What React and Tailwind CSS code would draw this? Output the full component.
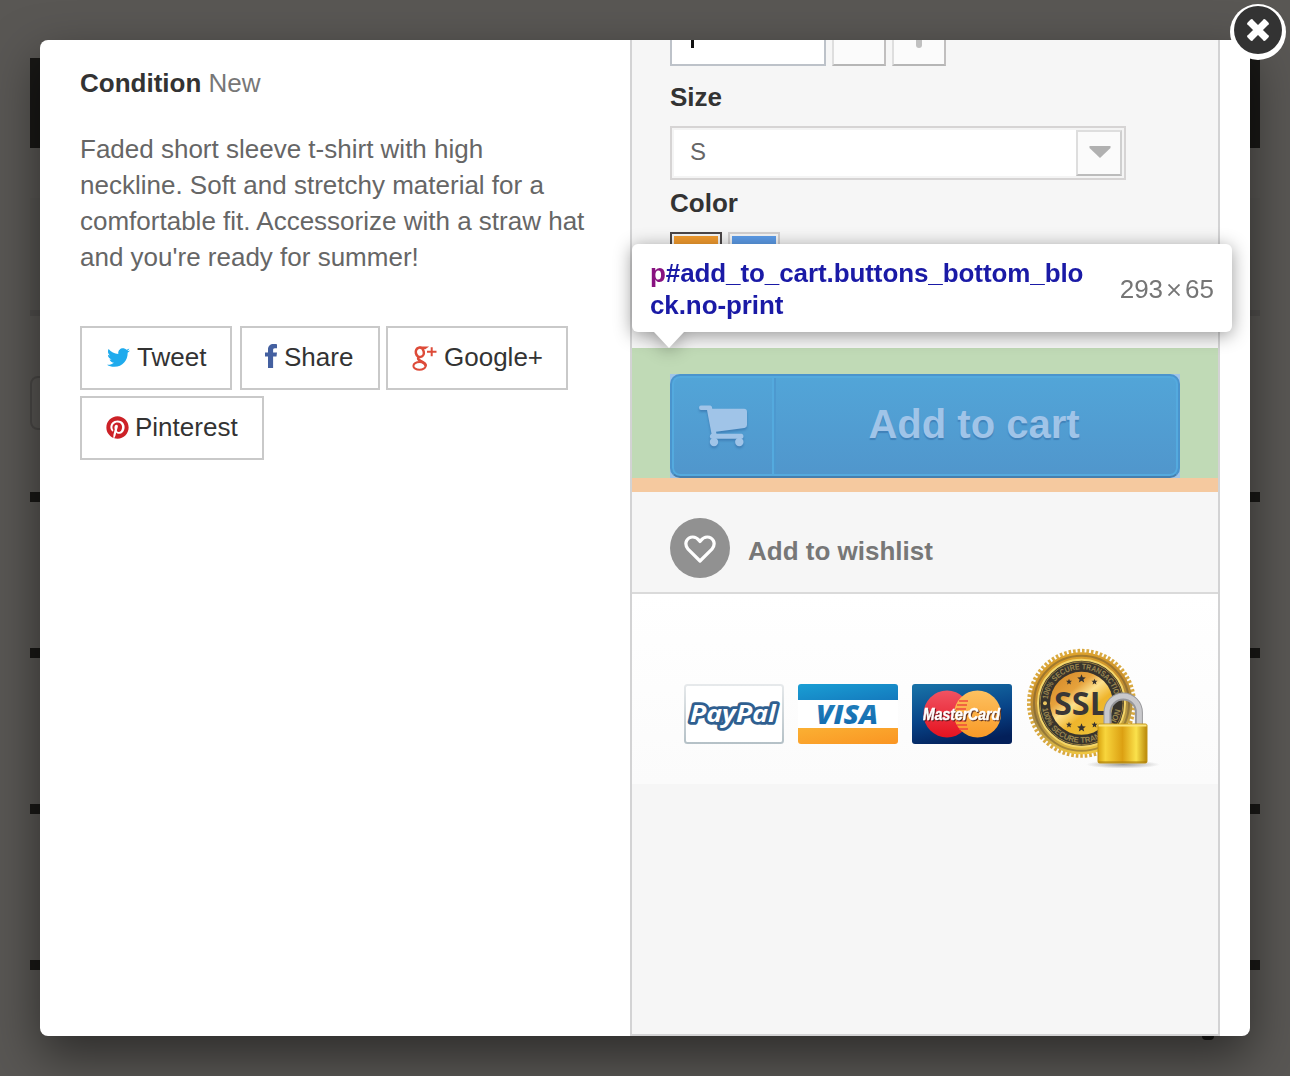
import React from "react";
import { FaTwitter, FaPinterest } from "react-icons/fa";

function ShareButton({ icon, label, className }) {
  return (
    <button type="button" className={`flex h-16 items-center border-2 border-[#c9c9c9] bg-white pl-6 text-[26px] leading-none text-[#333] ${className}`}>
      {icon}
      <span className="relative -top-px whitespace-nowrap">{label}</span>
    </button>
  );
}

function FacebookIcon() {
  return (
    <svg className="relative -top-0.5 ml-[-1px] mr-[7px] h-6 w-3 shrink-0" viewBox="0 0 12 24" fill="#4460a0">
      <path d="M12 .2v4H9.900C8.400 4.200 8.100 5 8.100 6.100v2.300H12L11.500 12.600H8.100V24H3V12.600H0V8.400h3V5.500C3 2 5.200 0 8.500 0 10.200 0 11.500.100 12 .200z" />
    </svg>
  );
}

function GooglePlusIcon() {
  return (
    <svg className="relative top-0 mr-[7px] h-[25px] w-[25px] shrink-0" viewBox="0 0 25 25" fill="none" stroke="#dd4b39">
      <ellipse cx="7.800" cy="6.300" rx="4" ry="4.700" strokeWidth="2.500" transform="rotate(-12 7.800 6.300)" />
      <path d="M7.500 1.300H14.800L13 2.600H10" strokeWidth="1.500" />
      <path d="M6.800 10.800C5.200 12.500 6.500 13.800 8.500 14.900 12 16.800 14.200 17.800 13.600 20.300" strokeWidth="2.600" />
      <ellipse cx="7.500" cy="19.900" rx="6.100" ry="3.900" strokeWidth="2" />
      <path d="M19.700 1.200v9M15 5.700h9.500" strokeWidth="2" />
    </svg>
  );
}

function CartIcon() {
  return (
    <svg className="relative -left-px h-[46px] w-[50px]" viewBox="698 403 50 46" fill="#a0c4e8" style={{ filter: "drop-shadow(0 2px 1px rgba(40,90,150,.45))" }}>
      <path d="M701 405.500h9c1.500 0 2 1 2.300 3.300H744q3 0 3 3V425q0 2.600-2.500 3L716 431.800l.5 2H741.500q2 0 2 2.500t-2 2.500H712q-2.200 0-2.200-2.500 0-1.500 1.700-2.500L707 410h-6q-2 0-2-2.200t2-2.300z" />
      <circle cx="714" cy="442" r="4.200" />
      <circle cx="739.300" cy="442" r="4.200" />
    </svg>
  );
}

function PayPalCard() {
  return (
    <svg className="h-[62px] w-[102px]" viewBox="0 0 102 62">
      <defs>
        <linearGradient id="ppEdge" x2="0" y2="1"><stop stopColor="#e6e9eb" /><stop offset="1" stopColor="#b5c1c7" /></linearGradient>
      </defs>
      <rect x="2" y="2" width="98" height="58" rx="2.500" fill="#fff" stroke="url(#ppEdge)" strokeWidth="2" />
      <text x="7" y="38.500" textLength="86" lengthAdjust="spacingAndGlyphs" fontFamily="Open Sans, sans-serif" fontSize="24" fontWeight="700" fontStyle="italic" fill="#fff" stroke="#2f5f90" strokeWidth="5.500" paintOrder="stroke" strokeLinejoin="round">PayPal</text>
    </svg>
  );
}

function VisaCard() {
  return (
    <svg className="h-[62px] w-[102px]" viewBox="0 0 102 62">
      <defs>
        <linearGradient id="vBlue" x2="1" y2="1"><stop stopColor="#1aa0d5" /><stop offset="1" stopColor="#1479bd" /></linearGradient>
        <linearGradient id="vText" x2="0" y2="1"><stop stopColor="#2583bd" /><stop offset="1" stopColor="#0f68ae" /></linearGradient>
        <linearGradient id="vOrange" x2="1" y2="1"><stop stopColor="#fbb033" /><stop offset="1" stopColor="#fa9422" /></linearGradient>
        <clipPath id="vClip"><rect x="1" y="1" width="100" height="60" rx="3" /></clipPath>
      </defs>
      <g clipPath="url(#vClip)">
        <rect width="102" height="62" fill="#fff" />
        <rect width="102" height="17" fill="url(#vBlue)" />
        <rect y="45" width="102" height="17" fill="url(#vOrange)" />
      </g>
      <text x="19" y="40.500" textLength="62" lengthAdjust="spacingAndGlyphs" fontFamily="Open Sans, sans-serif" fontSize="27" fontWeight="800" fontStyle="italic" fill="url(#vText)">VISA</text>
    </svg>
  );
}

function MasterCard() {
  return (
    <svg className="h-[62px] w-[102px]" viewBox="0 0 102 62">
      <defs>
        <linearGradient id="mBg" x1=".2" x2=".5" y2="1"><stop stopColor="#1770a6" /><stop offset=".55" stopColor="#084488" /><stop offset="1" stopColor="#03205a" /></linearGradient>
        <linearGradient id="mRed" x2="0" y2="1"><stop stopColor="#f15362" /><stop offset="1" stopColor="#e5121f" /></linearGradient>
        <linearGradient id="mGold" x2="0" y2="1"><stop stopColor="#fdc160" /><stop offset="1" stopColor="#f99a27" /></linearGradient>
      </defs>
      <rect x="1" y="1" width="100" height="60" rx="3" fill="url(#mBg)" />
      <circle cx="36" cy="31" r="23.500" fill="url(#mRed)" />
      <circle cx="66.500" cy="31" r="23.500" fill="url(#mGold)" />
      <path d="M48 18h9M46 22h10M45 26h10M45 38h10M46 42h10M48 46h9" stroke="#ee4b3d" strokeWidth="1.300" />
      <text x="12" y="36.500" textLength="77" lengthAdjust="spacingAndGlyphs" fontFamily="Liberation Sans, sans-serif" fontSize="16" fontWeight="700" fontStyle="italic" fill="#fff" stroke="#fff" strokeWidth=".5" style={{ filter: "drop-shadow(1px 1.500px .5px rgba(60,20,20,.8))" }}>MasterCard</text>
    </svg>
  );
}

const STAR = "0,-4.500 1.200,-1.500 4.300,-1.400 1.900,.6 2.700,3.700 0,1.900 -2.700,3.700 -1.900,.6 -4.300,-1.400 -1.200,-1.500";
const STARS = [[55, 31, 1], [42.500, 34, 0.7], [68, 34, 0.7], [55, 80, 1], [42.500, 77, 0.7], [68, 77, 0.7]];

function SslSeal() {
  return (
    <svg className="h-[124px] w-[136px]" viewBox="0 0 136 124">
      <defs>
        <linearGradient id="sGold" x1=".3" x2=".5" y2="1"><stop stopColor="#dfa42c" /><stop offset=".35" stopColor="#c98f2c" /><stop offset=".6" stopColor="#a88a44" /><stop offset="1" stopColor="#efc640" /></linearGradient>
        <linearGradient id="sCore" x2=".8" y2="1"><stop stopColor="#cf8224" /><stop offset=".35" stopColor="#e6a23c" /><stop offset=".5" stopColor="#fce08c" /><stop offset=".68" stopColor="#efb52c" /><stop offset="1" stopColor="#eac238" /></linearGradient>
        <linearGradient id="sLock" x2="1"><stop stopColor="#d9a410" /><stop offset=".15" stopColor="#f8d53c" /><stop offset=".5" stopColor="#dca012" /><stop offset=".78" stopColor="#fbe24c" /><stop offset="1" stopColor="#b98708" /></linearGradient>
        <radialGradient id="sShade"><stop stopColor="#555" stopOpacity=".55" /><stop offset="1" stopColor="#555" stopOpacity="0" /></radialGradient>
        <path id="ringTop" d="M21 55.500a34 34 0 0 1 68 0" />
        <path id="ringBottom" d="M15.500 55.500a39.500 39.500 0 0 0 79 0" />
      </defs>
      <g transform="translate(1.500 .8)">
        <circle cx="55" cy="55.500" r="52.500" fill="none" stroke="#d9a940" strokeWidth="4" strokeDasharray="2.600 1.900" />
        <circle cx="55" cy="55.500" r="51" fill="url(#sGold)" />
        <circle cx="55" cy="55.500" r="47.500" fill="none" stroke="#6b5630" strokeOpacity=".5" strokeWidth="2" />
        <circle cx="55" cy="55.500" r="43.500" fill="#38342c" stroke="#f4d568" strokeWidth="2" />
        <circle cx="55" cy="55.500" r="41.500" fill="none" stroke="#9a8040" strokeWidth="1" />
        <circle cx="55" cy="55.500" r="31.500" fill="url(#sCore)" />
        <g fill="#9a8650" fontFamily="Liberation Sans, sans-serif" fontSize="8" fontWeight="700">
          <text><textPath href="#ringTop" startOffset="4" textLength="99" lengthAdjust="spacingAndGlyphs">100% SECURE TRANSACTION</textPath></text>
          <text><textPath href="#ringBottom" startOffset="5" textLength="112" lengthAdjust="spacingAndGlyphs">100% SECURE TRANSACTION</textPath></text>
        </g>
        <circle cx="18.500" cy="55.500" r="2" fill="#e9c45e" />
        {STARS.map(([x, y, s]) => (
          <polygon key={`${x}-${y}`} points={STAR} fill="#35322f" transform={`translate(${x} ${y}) scale(${s})`} />
        ))}
        <text x="27.500" y="67" textLength="54" lengthAdjust="spacingAndGlyphs" fontFamily="Open Sans, sans-serif" fontSize="33" fontWeight="700" fill="#3a3736">SSL</text>
      </g>
      <ellipse cx="98" cy="117.500" rx="37" ry="4" fill="url(#sShade)" />
      <path d="M82.500 79V65.500a15.700 16 0 0 1 31.400 0V79" fill="none" stroke="#97979a" strokeWidth="8" />
      <path d="M82 79V65.500a16.200 16.500 0 0 1 32.400 0V79" fill="none" stroke="#c9c9cc" strokeWidth="5" />
      <rect x="73" y="77" width="49" height="39" rx="1.500" fill="url(#sLock)" stroke="#c29518" />
      <path d="M73.500 78.500h48" stroke="#fbe47c" strokeWidth="2" />
      <path d="M73.500 115h48" stroke="#a57a0c" strokeOpacity=".6" strokeWidth="1.500" />
    </svg>
  );
}

function Backdrop() {
  return (
    <div className="flex h-full flex-col bg-[#595754] px-[30px] pt-[58px]">
      <div className="h-[90px] shrink-0 bg-[#191816]" />
      <div className="mt-[50px] h-[112px] shrink-0 bg-[#575552]" />
      <div className="h-1.5 shrink-0 bg-[#504e4c]" />
      <div className="mt-[60px] h-[54px] w-[400px] shrink-0 rounded-lg border-2 border-[#4a4846]" />
      <div className="mt-[62px] h-2.5 shrink-0 bg-[#191816]" />
      <div className="mt-[146px] h-2.5 shrink-0 bg-[#191816]" />
      <div className="mt-[146px] h-2.5 shrink-0 bg-[#191816]" />
      <div className="mt-[146px] h-2.5 shrink-0 bg-[#191816]" />
      <div className="mr-[46px] mt-[50px] h-5 w-3 shrink-0 self-end rounded bg-[#191816]" />
    </div>
  );
}

function ProductInfo() {
  return (
    <section className="w-[590px] shrink-0 pl-10 pt-[25px]">
      <p className="leading-9 text-[#777]"><b className="text-[#333]">Condition</b> New</p>
      <p className="mt-[30px] whitespace-nowrap leading-9 text-[#666]">
        Faded short sleeve t-shirt with high<br />neckline. Soft and stretchy material for a<br />comfortable fit. Accessorize with a straw hat<br />and you're ready for summer!
      </p>
      <div className="mt-[51px] flex">
        <ShareButton className="mr-2 w-[152px]" label="Tweet" icon={<FaTwitter className="relative -top-px ml-px mr-[7px] h-[23px] w-[23px] shrink-0 text-[#1fabed]" />} />
        <ShareButton className="mr-1.5 w-[140px]" label="Share" icon={<FacebookIcon />} />
        <ShareButton className="w-[182px]" label="Google+" icon={<GooglePlusIcon />} />
      </div>
      <div className="mt-1.5 flex">
        <ShareButton className="w-[184px]" label="Pinterest" icon={<FaPinterest className="relative -top-px mr-1.5 h-[23px] w-[23px] shrink-0 text-[#cc2127]" />} />
      </div>
    </section>
  );
}

function Inspector() {
  return (
    <div className="absolute left-0 top-[204px] z-10 w-[600px]" style={{ filter: "drop-shadow(0 3px 9px rgba(0,0,0,.4))" }}>
      <div className="flex h-[88px] items-center justify-between rounded-md bg-white px-[18px] pt-0.5">
        <div className="whitespace-nowrap font-bold leading-8 tracking-[-0.09px] text-[#1a1aa6]">
          <span className="text-[#881280]">p</span>#add_to_cart.buttons_bottom_blo<br />ck.no-print
        </div>
        <div className="flex items-center text-[#757575]">
          <span>293</span>
          <svg className="mx-[5px] mt-0.5 h-3 w-3" viewBox="0 0 12 12" stroke="#757575" strokeWidth="1.900"><path d="M.5 .5l11 11M11.500 .5L.5 11.500" /></svg>
          <span>65</span>
        </div>
      </div>
      <svg className="-mt-px ml-[21px] block h-[17px] w-8" viewBox="0 0 32 17"><path d="M0 0h32v1h-1L16 17 1 1H0z" fill="#fff" /></svg>
    </div>
  );
}

function BuyPanel() {
  return (
    <section className="relative flex w-[590px] flex-col border-x-2 border-b-2 border-[#d3d3d4] bg-[#f6f6f6]">
      <div className="flex h-[26px] gap-1.5 pl-[38px]">
        <div className="w-[156px] border-2 border-t-0 border-[#bdc2c9] bg-white pl-[19px]">
          <div className="h-2 w-[3px] bg-[#111]" />
        </div>
        <div className="w-[54px] border-2 border-t-0 border-b-[#b6b6b6] border-l-[#dedede] border-r-[#c1bfbf] bg-[#fbfbfb]" />
        <div className="w-[54px] border-2 border-t-0 border-b-[#b6b6b6] border-l-[#dedede] border-r-[#c1bfbf] bg-[#fbfbfb] pl-[22px]">
          <div className="h-2 w-1.5 rounded-b-sm bg-[#c0c0c0]" />
        </div>
      </div>
      <div className="mt-[13px] pl-[38px] font-bold leading-9 text-[#333]">Size</div>
      <div className="ml-[38px] mt-[11px] flex h-[54px] w-[456px] items-center justify-between border-2 border-[#d6d4d4] bg-white pl-[18px] pr-0.5 shadow-[inset_0_0_0_2px_#f4f4f4]">
        <span className="relative -top-px text-2xl text-[#666]">S</span>
        <span className="flex h-[46px] w-[46px] items-center justify-center border-2 border-b-[#bcbcbc] border-l-[#dedede] border-r-[#cfcfcf] border-t-[#dedede] bg-[#fbfbfb]">
          <svg className="relative -top-px left-px h-3 w-[22px]" viewBox="0 0 22 12"><path d="M.5 0h21v2L11 12 .5 2z" fill="#b1b1b1" /></svg>
        </span>
      </div>
      <div className="mt-[5px] pl-[38px] font-bold leading-9 text-[#333]">Color</div>
      <div className="ml-[38px] mt-[11px] flex h-[52px] gap-1.5">
        <div className="w-[52px] border-2 border-[#4b4647] p-0.5"><div className="h-full bg-[#f39c2f]" /></div>
        <div className="w-[52px] border-2 border-[#d3d0d0] p-0.5"><div className="h-full bg-[#5d9ce8]" /></div>
      </div>
      <div className="mt-16 h-[130px] shrink-0 bg-[#c0dab6] px-[38px] pt-[26px]">
        <div className="bg-[#a0c5e8]">
          <button type="button" className="flex h-[104px] w-full rounded-[10px] border-2 border-b-[#467fae] border-l-[#4a94cd] border-r-[#4a94cd] border-t-[#4a94cd] bg-linear-to-b from-[#52a5d8] to-[#5096cc] text-[40px] font-bold text-[#a0c4e8] shadow-[inset_0_0_0_2px_#54aade]">
            <span className="flex h-full w-[102px] shrink-0 items-center justify-center border-r-2 border-[#54aade] pl-1">
              <CartIcon />
            </span>
            <span className="my-0.5 flex h-24 grow items-center justify-center border-l-2 border-[#4d99cf] pb-1 pr-1.5" style={{ textShadow: "0 2px 1px rgba(40,90,150,.4)" }}>Add to cart</span>
          </button>
        </div>
      </div>
      <div className="h-3.5 shrink-0 bg-[#f5c99f]" />
      <div className="flex h-[102px] shrink-0 items-center border-b-2 border-[#dadada] pl-[38px] pt-3">
        <span className="flex h-[60px] w-[60px] items-center justify-center rounded-full bg-[#919191]">
          <svg className="relative top-px h-[28px] w-8" viewBox="0 0 32 28" fill="none" stroke="#fff" strokeWidth="3.200"><path d="M16 26L3.800 13.800C-.5 8.200 3.200 2 8.800 2c4.200 0 6 3 7.200 4.500C17.200 5 19 2 23.200 2c5.600 0 9.300 6.200 5 11.800z" strokeLinejoin="round" /></svg>
        </span>
        <span className="relative top-[3px] ml-[18px] font-bold text-[#777]">Add to wishlist</span>
      </div>
      <div className="flex h-[190px] shrink-0 items-start gap-3 bg-linear-to-b from-white to-[#fbfbfb] pl-[51px]">
        <div className="mt-[89px] flex gap-3"><PayPalCard /><VisaCard /><MasterCard /></div>
        <div className="mt-[53px]"><SslSeal /></div>
      </div>
      <Inspector />
    </section>
  );
}

export default function App() {
  return (
    <div className="relative h-[1076px] w-[1290px] overflow-hidden font-['Liberation_Sans',Arial,sans-serif] text-[26px]">
      <Backdrop />
      <main className="absolute inset-10 flex rounded-lg bg-white shadow-[0_20px_50px_rgba(0,0,0,0.5)]">
        <ProductInfo />
        <BuyPanel />
      </main>
      <button type="button" aria-label="Close" className="absolute left-[1230px] top-1 flex h-14 w-14 justify-center rounded-full bg-white pt-0.5">
        <span className="flex h-12 w-12 items-center justify-center rounded-full bg-[#333]">
          <svg className="h-6 w-6" viewBox="0 0 24 24" stroke="#fff" strokeWidth="7" strokeLinejoin="round"><path d="M3.500 3.500l17 17M20.500 3.500l-17 17" /><path d="M5.500 2.500l-3 3M18.500 2.500l3 3M5.500 21.500l-3-3M18.500 21.500l3-3" strokeWidth="2.500" strokeLinecap="round" /></svg>
        </span>
      </button>
    </div>
  );
}
